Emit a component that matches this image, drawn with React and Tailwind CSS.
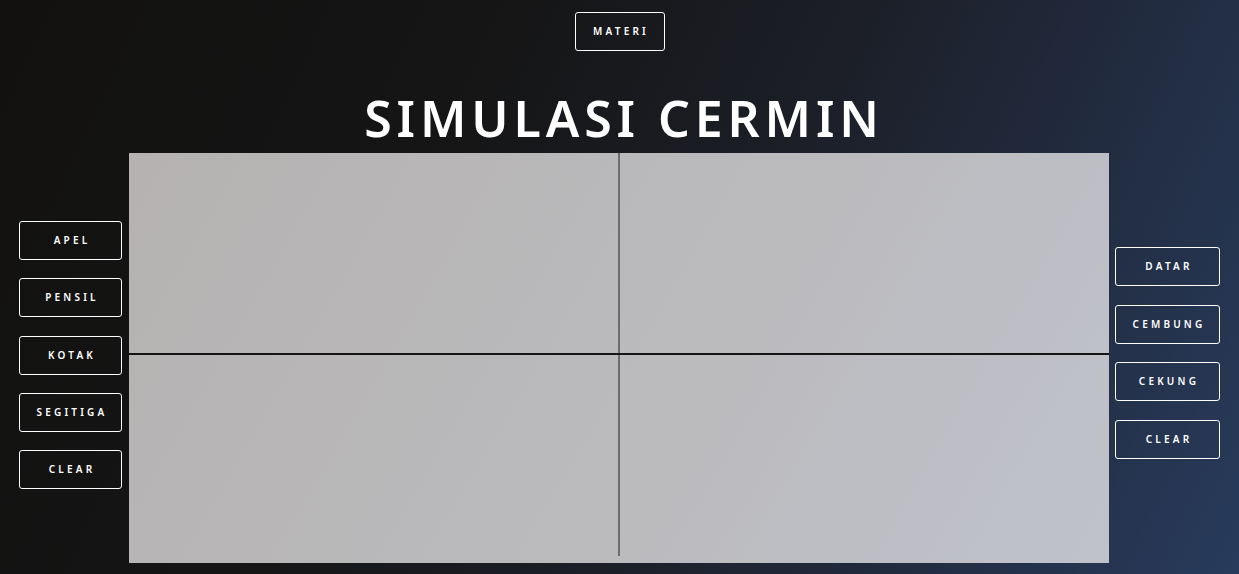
import React from 'react';

const LEFT = ['APEL', 'PENSIL', 'KOTAK', 'SEGITIGA', 'CLEAR'];
const RIGHT = ['DATAR', 'CEMBUNG', 'CEKUNG', 'CLEAR'];

function Btn({ label, className = '' }) {
  return (
    <button
      className={`h-[39px] border border-white rounded-[3px] text-white text-[10px] font-semibold tracking-[3.2px] pl-[3px] ${className}`}
    >
      {label}
    </button>
  );
}

export default function App() {
  return (
    <div
      className="w-[1239px] h-[574px] overflow-hidden bg-[linear-gradient(115deg,#121110_0%,#151515_33%,#1c1f28_58%,#283b5c_100%)] font-['Noto_Sans',sans-serif]"
    >
      {/* Top */}
      <div className="flex justify-center pt-[12px]">
        <Btn label="MATERI" className="w-[90px] h-[39px]" />
      </div>

      {/* Title */}
      <h1 className="text-center text-white text-[50px] leading-[58px] font-semibold tracking-[4.9px] mt-[38px] h-[64px] pl-[9px]">
        SIMULASI CERMIN
      </h1>

      {/* Main row */}
      <div className="flex items-center pl-[19px]">
        <div className="flex flex-col gap-[18.3px] w-[103px] mr-[7px] mt-[-6px]">
          {LEFT.map(l => <Btn key={l} label={l} className="w-[103px]" />)}
        </div>

        <div className="relative w-[980px] h-[410px] bg-[linear-gradient(120deg,#b5b2b1_0%,#bbbbbe_60%,#c0c2cb_100%)]">
          <svg className="absolute inset-0" width="980" height="410">
            <rect x="489" y="0" width="2" height="403" fill="#6d6d6d" />
            <rect x="0" y="200" width="980" height="2" fill="#151515" />
          </svg>
        </div>

        <div className="flex flex-col gap-[18.5px] w-[105px] ml-[6px] mt-[-10px]">
          {RIGHT.map((l, i) => <Btn key={i} label={l} className="w-[105px]" />)}
        </div>
      </div>
    </div>
  );
}
